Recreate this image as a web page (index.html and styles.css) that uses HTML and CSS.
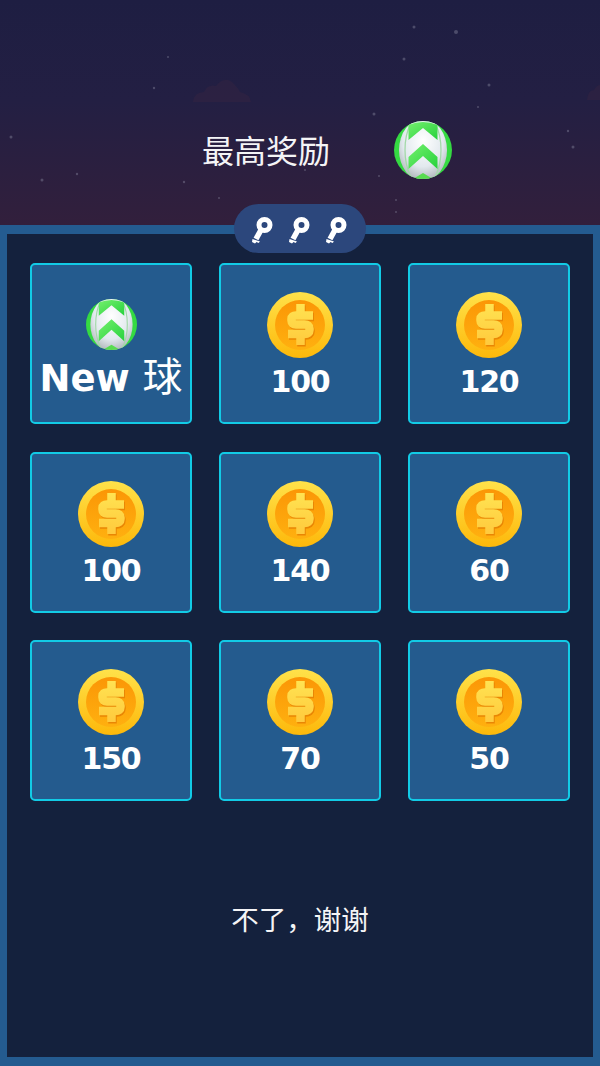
FILE: index.html
```html
<!DOCTYPE html>
<html lang="en">
  <head>
    <meta charset="UTF-8" />
    <meta name="viewport" content="width=device-width, initial-scale=1.0" />
    <title>最高奖励</title>
    <link rel="stylesheet" href="styles.css">
  </head>
  <body>
    <svg class="defs" width="0" height="0">
      <defs>
        <radialGradient id="ballBody" cx="50%" cy="35%" r="70%">
          <stop offset="0" stop-color="#ffffff" />
          <stop offset="0.6" stop-color="#e2e9ee" />
          <stop offset="1" stop-color="#a4aaae" />
        </radialGradient>
        <linearGradient id="ballGreen" x1="0" y1="0" x2="1" y2="1">
          <stop offset="0" stop-color="#74f06e" />
          <stop offset="1" stop-color="#27d23c" />
        </linearGradient>
        <linearGradient id="coinRim" x1="0" y1="0" x2="0" y2="1">
          <stop offset="0" stop-color="#ffe24a" />
          <stop offset="1" stop-color="#fdb80a" />
        </linearGradient>
        <linearGradient id="coinFace" x1="0" y1="0" x2="0" y2="1">
          <stop offset="0" stop-color="#fb9606" />
          <stop offset="1" stop-color="#ffb00f" />
        </linearGradient>
        <linearGradient id="coinSign" gradientUnits="userSpaceOnUse" x1="0" y1="12" x2="0" y2="54">
          <stop offset="0" stop-color="#ffe352" />
          <stop offset="1" stop-color="#ffc93c" />
        </linearGradient>
        <clipPath id="ballClip">
          <circle cx="29" cy="29" r="29" />
        </clipPath>
        <symbol id="ball" viewBox="0 0 58 58">
          <g clip-path="url(#ballClip)">
            <rect width="58" height="58" fill="#35da42" />
            <ellipse cx="29" cy="29" rx="24" ry="31" fill="url(#ballBody)" />
            <ellipse cx="29" cy="29" rx="18" ry="36" fill="none" stroke="#a3d9a8" stroke-width="1.300" />
            <path d="M14.500 19 L29 7 L43.500 19 V4 Q29 -2 14.500 4 Z" fill="url(#ballGreen)" />
            <path d="M29 23 L43.500 36 V48 L29 35 L14.500 48 V36 Z" fill="url(#ballGreen)" />
            <path d="M19 58 L29 52 L39 58 Z" fill="#58dc50" />
          </g>
        </symbol>
        <symbol id="coin" viewBox="0 0 66 66">
          <circle cx="33" cy="33" r="33" fill="url(#coinRim)" />
          <circle cx="33" cy="33" r="25" fill="url(#coinFace)" />
          <g fill="none" stroke="#e98604" stroke-width="8.500" transform="translate(1 1.500)">
            <path d="M46 23.500 H29 Q24.500 23.500 24.500 27 V28.500 Q24.500 32.500 29 32.500 H37.500 Q42.500 32.500 42.500 36.500 V38 Q42.500 42 37.500 42 H21" />
            <path d="M33.500 12 V20 M33.500 44 V53" />
          </g>
          <g fill="none" stroke="url(#coinSign)" stroke-width="8.500">
            <path d="M46 23.500 H29 Q24.500 23.500 24.500 27 V28.500 Q24.500 32.500 29 32.500 H37.500 Q42.500 32.500 42.500 36.500 V38 Q42.500 42 37.500 42 H21" />
            <path d="M33.500 12 V20 M33.500 44 V53" />
          </g>
        </symbol>
        <symbol id="key" viewBox="0 0 24 30">
          <circle cx="13.500" cy="11" r="5.500" fill="none" stroke="#fff" stroke-width="5" />
          <path d="M10.500 15 L5 25" stroke="#fff" stroke-width="5.500" fill="none" />
          <path d="M1.500 25 L9 27.500 L7.500 29 L5.500 28 L4 29.500 L1 28 Z" fill="#fff" />
        </symbol>
      </defs>
    </svg>

    <div class="screen">
      <header class="hero">
        <!-- stars and cloud -->
        <svg class="sky" viewBox="0 0 600 225" width="600" height="225">
          <g fill="#8f90a6" opacity="0.4">
            <circle cx="414" cy="27" r="1.500" />
            <circle cx="456" cy="32" r="2" />
            <circle cx="168" cy="57" r="1" />
            <circle cx="404" cy="59" r="1.500" />
            <circle cx="154" cy="88" r="1.200" />
            <circle cx="489" cy="85" r="1.500" />
            <circle cx="478" cy="107" r="1" />
            <circle cx="374" cy="114" r="1.500" />
            <circle cx="11" cy="137" r="1.500" />
            <circle cx="568" cy="131" r="1.200" />
            <circle cx="573" cy="147" r="1.500" />
            <circle cx="77" cy="174" r="1.200" />
            <circle cx="42" cy="180" r="1.500" />
            <circle cx="184" cy="182" r="1.200" />
            <circle cx="305" cy="170" r="1" />
            <circle cx="379" cy="176" r="1" />
            <circle cx="219" cy="198" r="1" />
            <circle cx="396" cy="200" r="1" />
            <circle cx="396" cy="212" r="1" />
          </g>
          <path d="M193 102 Q194 92 204 92 Q208 84 216 86 Q224 76 232 82 Q238 88 240 92 Q250 94 251 102 Z" fill="#3a2540" opacity="0.4" />
          <path d="M587 100 Q588 90 594 90 Q597 85 600 85 V100 Z" fill="#3a2540" opacity="0.4" />
        </svg>
        <div class="best">
          <span class="best-label">最高奖励</span>
          <svg class="best-ball"><use href="#ball" /></svg>
        </div>
      </header>

      <main class="panel">
        <div class="keys">
          <svg class="key"><use href="#key" /></svg>
          <svg class="key"><use href="#key" /></svg>
          <svg class="key"><use href="#key" /></svg>
        </div>

        <div class="grid">
          <div class="card card-new">
            <svg class="card-ball"><use href="#ball" /></svg>
            <span class="new-label">New <span class="new-char">球</span></span>
          </div>
          <div class="card"><svg class="coin"><use href="#coin" /></svg><span class="amount">100</span></div>
          <div class="card"><svg class="coin"><use href="#coin" /></svg><span class="amount">120</span></div>
          <div class="card"><svg class="coin"><use href="#coin" /></svg><span class="amount">100</span></div>
          <div class="card"><svg class="coin"><use href="#coin" /></svg><span class="amount">140</span></div>
          <div class="card"><svg class="coin"><use href="#coin" /></svg><span class="amount">60</span></div>
          <div class="card"><svg class="coin"><use href="#coin" /></svg><span class="amount">150</span></div>
          <div class="card"><svg class="coin"><use href="#coin" /></svg><span class="amount">70</span></div>
          <div class="card"><svg class="coin"><use href="#coin" /></svg><span class="amount">50</span></div>
        </div>

        <p class="skip">不了，谢谢</p>
      </main>
    </div>
  </body>
</html>
```

FILE: styles.css
```css
body {
  margin: 0;
  background: #14213d;
  font-family: "DejaVu Sans", "Noto Sans CJK SC", sans-serif;
  color: #fff;
}
.defs {
  display: block;
  height: 0;
}
.screen {
  width: 600px;
  height: 1066px;
  display: flex;
  flex-direction: column;
  overflow: hidden;
}
.hero {
  position: relative;
  height: 225px;
  flex: none;
  box-sizing: border-box;
  padding: 121px 0 0 202px;
  background: linear-gradient(#1e1e42 0%, #231f43 45%, #321f3c 100%);
}
.sky {
  position: absolute;
  left: 0;
  top: 0;
}
.best {
  position: relative;
  display: flex;
  align-items: center;
  gap: 64px;
}
.best-label {
  font-family: "Noto Sans CJK SC", sans-serif;
  font-size: 32px;
  line-height: 54px;
  padding-bottom: 2px;
  color: #f4f4f6;
}
.best-ball {
  width: 58px;
  height: 58px;
}
.panel {
  position: relative;
  flex: 1;
  box-sizing: border-box;
  border: 7px solid #245b90;
  border-top-width: 9px;
  border-bottom-width: 9px;
  background: #14213d;
  padding: 29px 23px 0;
}
.keys {
  position: absolute;
  left: 227px;
  top: -30px;
  width: 132px;
  height: 49px;
  border-radius: 25px;
  background: #2c477c;
  display: flex;
  justify-content: center;
  align-items: center;
  gap: 13px;
}
.key {
  width: 24px;
  height: 30px;
}
.grid {
  display: grid;
  grid-template-columns: repeat(3, 162px);
  grid-auto-rows: 161px;
  column-gap: 27px;
  row-gap: 27.500px;
}
.card {
  box-sizing: border-box;
  border: 2px solid #12cbe6;
  border-radius: 5px;
  background: #245b8e;
  display: flex;
  flex-direction: column;
  align-items: center;
  padding-top: 27px;
}
.coin {
  width: 66px;
  height: 66px;
  flex: none;
}
.amount {
  font-size: 30px;
  font-weight: 700;
  line-height: 48px;
  letter-spacing: -1.200px;
}
.card-new {
  padding-top: 34px;
}
.card-ball {
  width: 51px;
  height: 51px;
  flex: none;
}
.new-label {
  font-size: 37px;
  font-weight: 700;
  line-height: 48px;
  white-space: nowrap;
}
.new-char {
  font-family: "Noto Sans CJK SC", sans-serif;
  font-size: 40px;
  font-weight: 400;
}
.skip {
  margin: 97px 0 0;
  text-align: center;
  font-family: "Noto Sans CJK SC", sans-serif;
  font-size: 27.500px;
  line-height: 40px;
  color: #f4f4f6;
}
```
